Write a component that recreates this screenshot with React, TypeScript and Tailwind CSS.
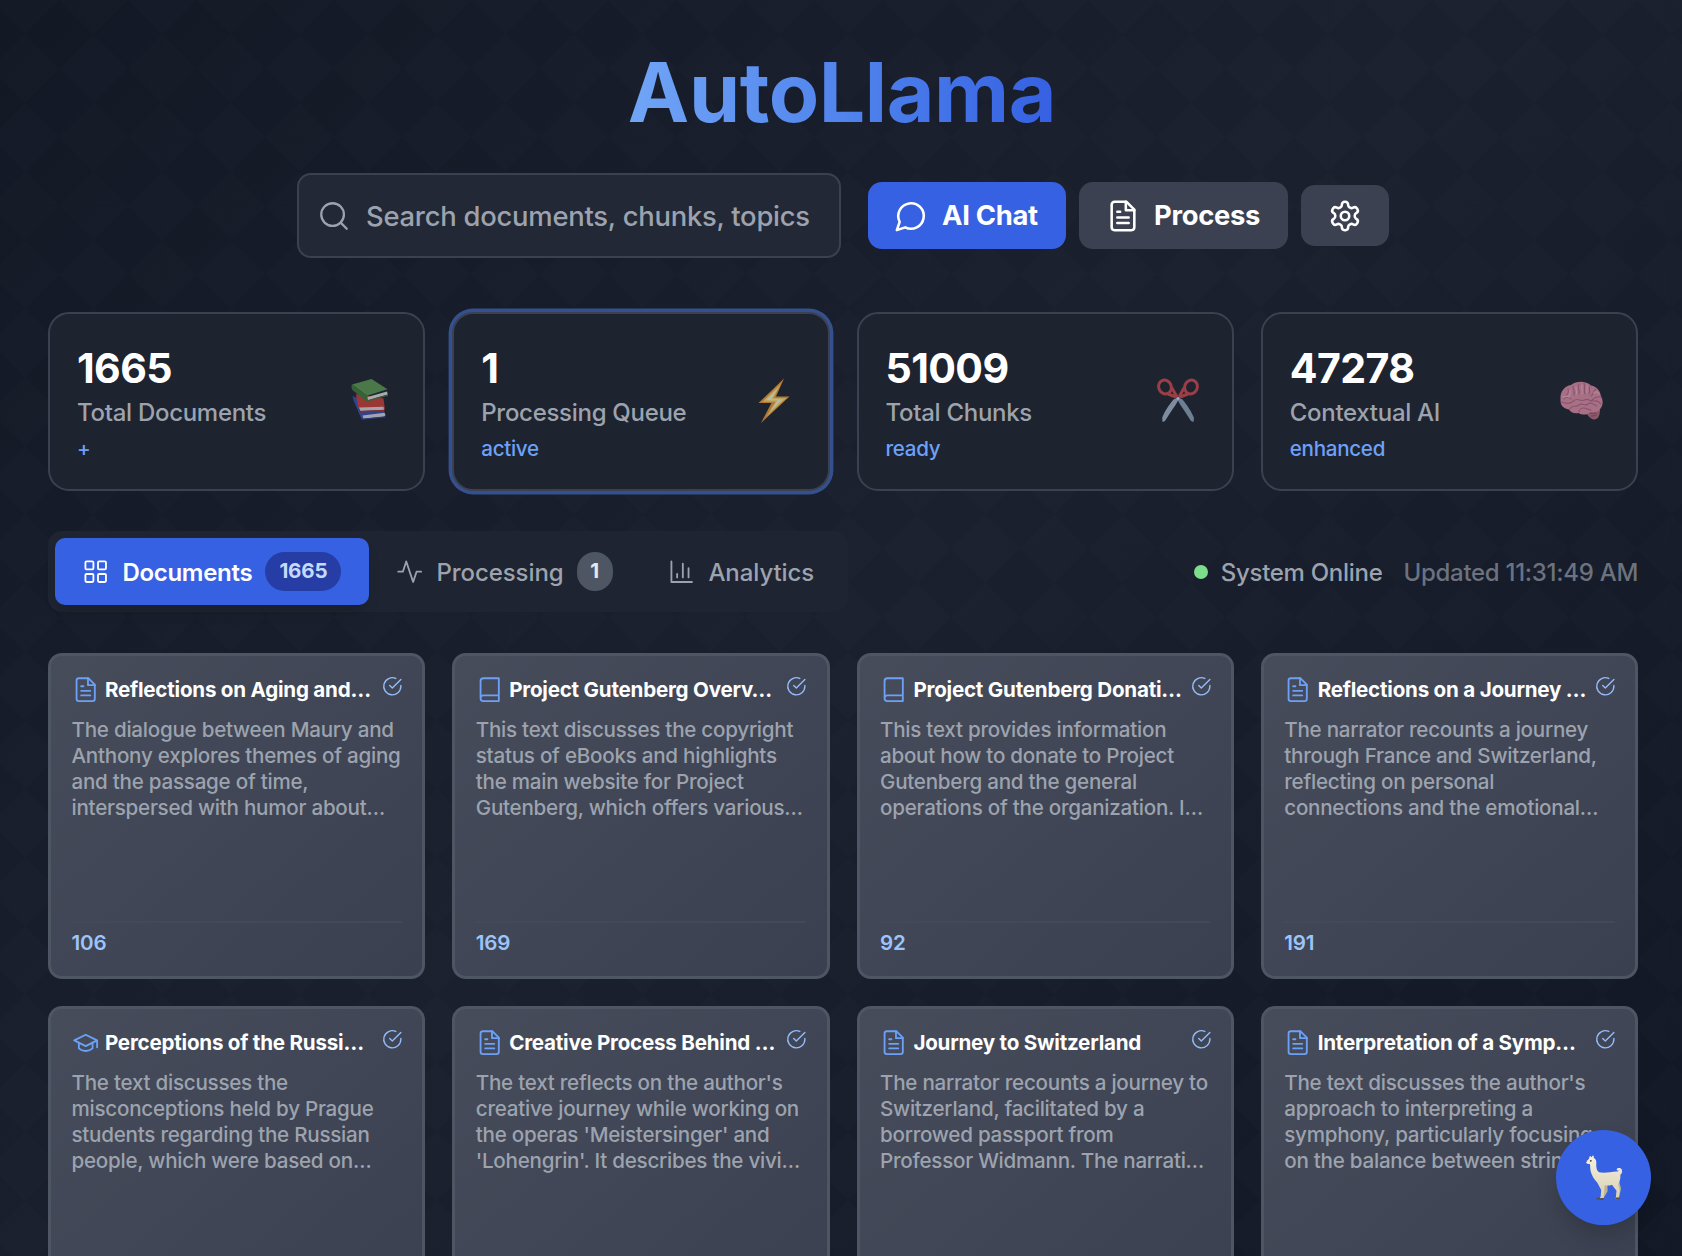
import React from "react";

type IconProps = { className?: string; strokeWidth?: number };

function Icon({ className, strokeWidth = 1.6, children }: IconProps & { children: React.ReactNode }) {
  return (
    <svg viewBox="0 0 24 24" fill="none" stroke="currentColor" strokeWidth={strokeWidth} strokeLinecap="round" strokeLinejoin="round" className={className}>
      {children}
    </svg>
  );
}

const SearchIcon = (p: IconProps) => (
  <Icon {...p}><circle cx="11" cy="11" r="8" /><path d="m21 21-4.3-4.3" /></Icon>
);
const ChatIcon = (p: IconProps) => (
  <Icon {...p}><path d="M7.9 20A9 9 0 1 0 4 16.1L2 22Z" /></Icon>
);
const FileIcon = (p: IconProps) => (
  <Icon {...p}>
    <path d="M14.5 2H6a2 2 0 0 0-2 2v16a2 2 0 0 0 2 2h12a2 2 0 0 0 2-2V7.5L14.5 2z" />
    <path d="M14 2v6h6M16 13H8M16 17H8M10 9H8" />
  </Icon>
);
const GearIcon = (p: IconProps) => (
  <Icon {...p}>
    <path d="M12.22 2h-.44a2 2 0 0 0-2 2v.18a2 2 0 0 1-1 1.73l-.43.25a2 2 0 0 1-2 0l-.15-.08a2 2 0 0 0-2.73.73l-.22.38a2 2 0 0 0 .73 2.73l.15.1a2 2 0 0 1 1 1.72v.51a2 2 0 0 1-1 1.74l-.15.09a2 2 0 0 0-.73 2.73l.22.38a2 2 0 0 0 2.73.73l.15-.08a2 2 0 0 1 2 0l.43.25a2 2 0 0 1 1 1.73V20a2 2 0 0 0 2 2h.44a2 2 0 0 0 2-2v-.18a2 2 0 0 1 1-1.73l.43-.25a2 2 0 0 1 2 0l.15.08a2 2 0 0 0 2.73-.73l.22-.39a2 2 0 0 0-.73-2.73l-.15-.08a2 2 0 0 1-1-1.74v-.5a2 2 0 0 1 1-1.74l.15-.09a2 2 0 0 0 .73-2.73l-.22-.38a2 2 0 0 0-2.73-.73l-.15.08a2 2 0 0 1-2 0l-.43-.25a2 2 0 0 1-1-1.73V4a2 2 0 0 0-2-2z" />
    <circle cx="12" cy="12" r="3" />
  </Icon>
);
const GridIcon = (p: IconProps) => (
  <Icon {...p}>
    <rect x="3" y="3" width="7" height="7" rx="1" />
    <rect x="14" y="3" width="7" height="7" rx="1" />
    <rect x="14" y="14" width="7" height="7" rx="1" />
    <rect x="3" y="14" width="7" height="7" rx="1" />
  </Icon>
);
const PulseIcon = (p: IconProps) => (
  <Icon {...p}><path d="M22 12h-4l-3 9L9 3l-3 9H2" /></Icon>
);
const ChartIcon = (p: IconProps) => (
  <Icon {...p}><path d="M3 3v18h18M18 17V9M13 17V5M8 17v-3" /></Icon>
);
const BookIcon = (p: IconProps) => (
  <Icon {...p}><path d="M4 19.5v-15A2.5 2.5 0 0 1 6.5 2H20v20H6.5a2.5 2.5 0 0 1 0-5H20" /></Icon>
);
const CapIcon = (p: IconProps) => (
  <Icon {...p}><path d="M22 10v6M2 10l10-5 10 5-10 5z" /><path d="M6 12v5c3 3 9 3 12 0v-5" /></Icon>
);
const CheckIcon = (p: IconProps) => (
  <Icon {...p}><path d="M22 11.08V12a10 10 0 1 1-5.93-9.14" /><path d="m9 11 3 3L22 4" /></Icon>
);

function Books() {
  return (
    <svg viewBox="-2 0 48 48" className="size-12">
      <path d="M5.5 19l1 4.500 8 18.500 24-3-1.500-5-22-11z" fill="#3451b8" />
      <path d="M15.500 38.500l22-2.800 1 2.300-1.500 1.800-20.500 2z" fill="#d9dbe2" />
      <path d="M14.500 41.800l24-2.500v1.200l-23.500 2.300z" fill="#2c459f" />
      <path d="M9 17l2 14 27 1.500-1.500-11z" fill="#cf3f36" />
      <path d="M12 30.500l24.500-.8.500 3.300-23.500 1z" fill="#dcdce2" />
      <path d="M11 34l26.500-1.200v1.400l-25.500 1.500z" fill="#b1302b" />
      <path d="M5 7.500L24.500 2l16 10.300-20.500 6.500z" fill="#5f9c53" />
      <path d="M5 7.500L20 18.800v6L6 13.500c-1.500-1.500-2-4-1-6z" fill="#3f7d3b" />
      <path d="M20.500 20l19.500-5.500.8 3-19.800 5.500z" fill="#e2e4e6" />
      <path d="M20 23.500l21-6v1.300l-21 6z" fill="#3f7d3b" />
    </svg>
  );
}

function Bolt() {
  return (
    <svg viewBox="0 0 48 48" className="size-12">
      <path d="M34 1.500L8.500 26h13L11 46 39.500 19.500H26z" fill="#f29d38" />
      <path d="M31 6.500L12.500 24.700h13L16.500 39.500 36.500 21H23.500z" fill="#ffe06a" />
      <path d="M28 11L16 23.200h11.500L20.500 34l12.500-11.700H21.500z" fill="#fffad0" />
    </svg>
  );
}

function Scissors() {
  return (
    <svg viewBox="0 0 48 48" className="size-12">
      <path d="M22 19.500l6.500 3C33.500 28.500 38 35.500 40 41l-.5 4-2.500-1C31 34 25 27 22 19.500z" fill="#8fa6bd" />
      <path d="M26 19.500l-6.500 3C14.500 28.500 10 35.500 8.200 41l.3 4 2.500-1C17 34 23 27 26 19.500z" fill="#a6bbcf" />
      <g fill="none" stroke="#d24a50" strokeWidth="3">
        <ellipse cx="11" cy="10" rx="6.300" ry="7" transform="rotate(-25 11 10)" />
        <ellipse cx="37" cy="10" rx="6.300" ry="7" transform="rotate(25 37 10)" />
        <path d="M14 17l8 3M34 17l-8 3M18 11l5 9M30 11l-5 9" />
      </g>
      <circle cx="24" cy="21.500" r="1.300" fill="#e5edf5" />
    </svg>
  );
}

function Brain() {
  return (
    <svg viewBox="0 0 48 48" className="size-12">
      <path d="M27 33c2 5 5 9 9 9.500 4 0 6-4 6-10z" fill="#b87283" />
      <path d="M2.500 22C2 14 7 9 13 8c6-4.500 15-4 20 .5 6 1 9.500 6 10 11 2.500 4 2 9-.5 12-2 4-6 4-9 3.500-4 3-9 3.500-13 1-4 1-8-.5-9.500-3.500C5 31.500 2 28 2.500 22z" fill="#e391aa" />
      <g fill="none" stroke="#b9698a" strokeWidth="1.100" strokeLinecap="round">
        <path d="M6 22c2-2 5-2 7 0M10 12c1 3 0 5-2 6M15 9c0 4 2 5 1 9M21 7c-2 4 1 6 0 10M26 6c2 4-1 7 1 11M32 9c-2 3 1 5-1 8M38 12c-3 2-2 5-5 7M43 20c-4-1-7 1-9 3M3.500 25c4 1 8 3 12-1s7 1 11-1 5 1 8 1 6-1 8 3M12 32c2-5 6-1 9-4s6 2 9-1 6 1 9 2M21 35c0-3 3-4 5-4s4 2 7 2" />
      </g>
      <g fill="none" stroke="#f3b5c4" strokeWidth="1.200" strokeLinecap="round">
        <path d="M18 10c0 3 1 4 .500 7M24 8c-1 3 1 6 0 9M29 8c1 3-1 5 0 8M12 13c.500 2 0 4-1 6M5 20c2-1 4-1 6 0M36 16c2-2 4-1 5 1" />
      </g>
      <path d="M31 36c2 .7 5 .500 7 0M33 39c2 0 4 0 6-1.500" fill="none" stroke="#8f5265" />
    </svg>
  );
}

function Llama() {
  return (
    <svg viewBox="0 0 40 48" className="h-12 w-10">
      <defs>
        <linearGradient id="wool" x1="0" y1="0" x2="0" y2="1">
          <stop offset="0" stopColor="#f6f1df" />
          <stop offset="1" stopColor="#d8cfb2" />
        </linearGradient>
      </defs>
      <path d="M16 30l3 8-3 6h3.500l4-6.500V30zM29 28l5 7-2 9h3l2-9.500-2-8z" fill="#bdb395" />
      <path d="M5.500 3c0-1.500 1.200-1.200 1.700.3L8.500 2c1-1.200 1.500.5 1.200 1.800 2 1 2.800 3 2.600 5.200-.3 4 .2 7.500 2.700 9.300 5 1.200 12-.3 17.500-.8 1.500.2 2.500-.5 2-1.200-1 .5-2 0-1.800-1.100.3-1.500 4-1.800 5 .3.900 2 .3 4-1.300 5.200.3 4-.8 7-2.200 9.500l1.500 6-1.300 9h-2.700l.8-8.500-4.500-6c-2.500 1-5 1-7.300.5L19.500 45h-3l.7-9-4-7.500C10.500 25.500 7 21 6.300 15L6 10c-2 .3-4-.5-4-2 0-1.200 2-1.800 2.800-3z" fill="url(#wool)" />
      <circle cx="6.800" cy="6.800" r=".9" fill="#3a3228" />
      <path d="M1.800 7.200c.4-.8 1-.8 1.600-.4l-.6 1.400z" fill="#7d6c5c" />
      <path d="M12.700 43.800h3.300v1.700h-4zM16.500 44h3.300v2h-4zM32 43.500h3.500v2h-4z" fill="#55504a" />
    </svg>
  );
}

const stats = [
  { value: "1665", label: "Total Documents", note: "+", art: <Books />, active: false },
  { value: "1", label: "Processing Queue", note: "active", art: <Bolt />, active: true },
  { value: "51009", label: "Total Chunks", note: "ready", art: <Scissors />, active: false },
  { value: "47278", label: "Contextual AI", note: "enhanced", art: <Brain />, active: false },
];

const docs = [
  { icon: FileIcon, title: "Reflections on Aging and…", lines: ["The dialogue between Maury and", "Anthony explores themes of aging", "and the passage of time,", "interspersed with humor about…"], count: "106" },
  { icon: BookIcon, title: "Project Gutenberg Overv…", lines: ["This text discusses the copyright", "status of eBooks and highlights", "the main website for Project", "Gutenberg, which offers various…"], count: "169" },
  { icon: BookIcon, title: "Project Gutenberg Donati…", lines: ["This text provides information", "about how to donate to Project", "Gutenberg and the general", "operations of the organization. I…"], count: "92" },
  { icon: FileIcon, title: "Reflections on a Journey …", lines: ["The narrator recounts a journey", "through France and Switzerland,", "reflecting on personal", "connections and the emotional…"], count: "191" },
  { icon: CapIcon, title: "Perceptions of the Russi…", lines: ["The text discusses the", "misconceptions held by Prague", "students regarding the Russian", "people, which were based on…"], count: "" },
  { icon: FileIcon, title: "Creative Process Behind …", lines: ["The text reflects on the author's", "creative journey while working on", "the operas 'Meistersinger' and", "'Lohengrin'. It describes the vivi…"], count: "" },
  { icon: FileIcon, title: "Journey to Switzerland", lines: ["The narrator recounts a journey to", "Switzerland, facilitated by a", "borrowed passport from", "Professor Widmann. The narrati…"], count: "" },
  { icon: FileIcon, title: "Interpretation of a Symp…", lines: ["The text discusses the author's", "approach to interpreting a", "symphony, particularly focusing", "on the balance between string…"], count: "" },
];

export default function App() {
  return (
    <div className="h-[1256px] w-full overflow-hidden bg-[linear-gradient(135deg,#131825_0%,#1a202e_50%,#111724_100%)] font-['Inter',sans-serif]">
      <div className="h-full bg-[linear-gradient(45deg,rgba(255,255,255,0.007)_25%,transparent_25%,transparent_75%,rgba(255,255,255,0.007)_75%),linear-gradient(-45deg,rgba(255,255,255,0.007)_25%,transparent_25%,transparent_75%,rgba(255,255,255,0.007)_75%)] bg-[length:68.6px_68.6px] bg-[position:25px_0] pt-[51px] pr-[44px] pl-12">
        <h1 className="pr-0.5 text-center text-[82.3px] leading-[82px] font-bold tracking-[-0.005em]">
          <span className="inline-block bg-linear-to-r from-[#71a5f6] to-[#3560e2] bg-clip-text text-transparent">AutoLlama</span>
        </h1>

        <div className="mt-10 flex items-center justify-center">
          <div className="mr-[27px] flex h-[85px] w-[544px] items-center rounded-[14px] border-2 border-[#3b4150] bg-[#222835] pl-[18px] text-[27.4px] text-[#9da3ae]">
            <SearchIcon className="mr-[15px] size-[34px] shrink-0" />
            <span className="pt-0.5 font-[450] tracking-[-0.009em] whitespace-nowrap">Search documents, chunks, topics</span>
          </div>
          <button className="mr-[13px] flex h-[67px] w-[198px] items-center rounded-[14px] bg-[#3761e3] pl-[26px] text-[27.4px] font-bold tracking-[-0.011em] text-white">
            <ChatIcon className="mr-[14px] size-[34px]" strokeWidth={1.8} />
            <span className="whitespace-nowrap">AI Chat</span>
          </button>
          <button className="mr-[13px] flex h-[67px] w-[209px] items-center rounded-[14px] bg-[#3b4150] pl-[27px] text-[27.4px] font-bold tracking-[-0.011em] text-white">
            <FileIcon className="mr-[14px] size-[34px]" strokeWidth={1.8} />
            <span>Process</span>
          </button>
          <button className="flex h-[61px] w-[88px] items-center justify-center rounded-[14px] bg-[#3b4150] text-white">
            <GearIcon className="size-[34px]" strokeWidth={1.8} />
          </button>
        </div>

        <div className="mt-[54px] grid grid-cols-4 gap-[27px]">
          {stats.map((s) => (
            <div key={s.label} className={`flex h-[179px] items-center justify-between rounded-[21px] border-2 border-[#3b4150] bg-[#1e2330] pr-[30px] pl-[27px] ${s.active ? "shadow-[0_0_0_3.4px_#34508f]" : ""}`}>
              <div className="pt-1.5">
                <div className="text-[41.1px] leading-[50px] font-bold tracking-[-0.015em] text-white">{s.value}</div>
                <div className="pt-px text-[24px] leading-[38px] font-[450] tracking-[-0.012em] text-[#9da3ae]">{s.label}</div>
                <div className="text-[20.6px] leading-[34px] font-[450] tracking-[-0.014em] text-[#6ca1f7]">{s.note}</div>
              </div>
              <div className="pb-0.5 opacity-70">{s.art}</div>
            </div>
          ))}
        </div>

        <div className="mt-10 flex h-[81px] items-center justify-between">
          <div className="flex h-[81px] w-[800px] items-center rounded-[14px] bg-[#1e2431] p-[7px] text-[24px] font-medium tracking-[-0.003em] text-[#9da3ae]">
            <div className="flex h-[67px] w-[314px] items-center rounded-[10px] bg-[#3761e3] pl-[27px] text-white shadow-lg">
              <GridIcon className="mr-[13px] size-[27.4px]" />
              <span className="pt-0.5 font-semibold tracking-[-0.012em]">Documents</span>
              <span className="ml-[13px] flex h-[39px] w-[76px] items-center justify-center rounded-full bg-[#263da5] text-[20.6px] font-bold tracking-[-0.01em] text-[#c3dafc]">1665</span>
            </div>
            <div className="flex h-[67px] w-[271px] items-center pl-[27px]">
              <PulseIcon className="mr-[13px] size-[27.4px]" />
              <span className="pt-0.5">Processing</span>
              <span className="ml-[13px] flex h-[39px] w-9 items-center justify-center rounded-full bg-[#4e5563] text-[20.6px] font-bold text-[#e5e7ea]">1</span>
            </div>
            <div className="flex h-[67px] items-center pl-7">
              <ChartIcon className="mr-[13px] size-[27.4px]" />
              <span className="pt-0.5">Analytics</span>
            </div>
          </div>
          <div className="flex items-center text-[24px] font-[450] tracking-[-0.012em] whitespace-nowrap">
            <span className="mr-[13px] size-[14px] rounded-full bg-[#7cdd8a]" />
            <span className="mr-[21px] pt-0.5 text-[#9da3ae]">System Online</span>
            <span className="pt-0.5 text-[#6c727f]">Updated 11:31:49 AM</span>
          </div>
        </div>

        <div className="mt-[41px] grid grid-cols-4 gap-x-[27px] gap-y-[27px]">
          {docs.map((d) => (
            <div key={d.title} className="flex h-[326px] flex-col rounded-[14px] border-3 border-[#4e5563] bg-linear-to-br from-[#464c5a] to-[#3a4050] px-[20.5px] pt-5">
              <div className="flex h-[27px] items-center">
                <d.icon className="mr-[6px] size-[27.4px] shrink-0 text-[#6ca1f7]" />
                <span className="min-w-0 flex-1 text-[20.6px] leading-[25px] font-bold tracking-[-0.011em] whitespace-nowrap text-white">{d.title}</span>
                <CheckIcon className="-mr-px size-[20.6px] shrink-0 self-start text-[#94bcf9]" />
              </div>
              <div className="mt-[14px] text-[20.6px] leading-[26.1px] font-[450] tracking-[-0.012em] whitespace-nowrap text-[#9da3ae]">
                {d.lines.map((l) => (
                  <div key={l}>{l}</div>
                ))}
              </div>
              <div className="mt-auto mb-[20px] h-[35px] border-t-2 border-[#434957] pt-[7px] text-[20.6px] leading-[26px] font-semibold tracking-[-0.01em] text-[#9cc4fa]">{d.count}</div>
            </div>
          ))}
        </div>
      </div>

      <button className="fixed right-[31px] bottom-[31px] flex size-[95px] items-center justify-center rounded-full bg-[#3761e3] shadow-[0_12px_24px_-4px_rgba(0,0,0,0.2)]">
        <Llama />
      </button>
    </div>
  );
}
